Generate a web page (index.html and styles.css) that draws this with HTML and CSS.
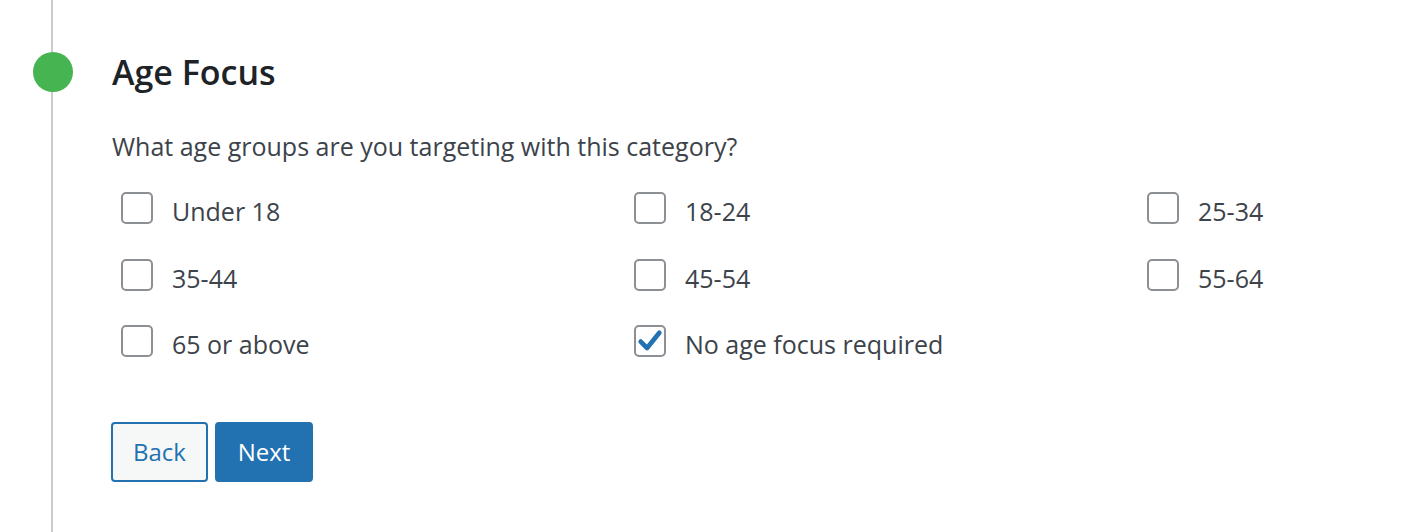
FILE: index.html
```html
<!DOCTYPE html>
<html>
<head>
<meta charset="utf-8">
<link rel="stylesheet" href="styles.css">
</head>
<body>
<div class="timeline">
  <div class="step">
    <span class="dot"></span>
    <h2 class="title">Age Focus</h2>
    <p class="question">What age groups are you targeting with this category?</p>
    <div class="options">
      <label class="opt"><span class="box"></span><span class="lbl">Under 18</span></label>
      <label class="opt"><span class="box"></span><span class="lbl">18-24</span></label>
      <label class="opt"><span class="box"></span><span class="lbl">25-34</span></label>
      <label class="opt"><span class="box"></span><span class="lbl">35-44</span></label>
      <label class="opt"><span class="box"></span><span class="lbl">45-54</span></label>
      <label class="opt"><span class="box"></span><span class="lbl">55-64</span></label>
      <label class="opt"><span class="box"></span><span class="lbl">65 or above</span></label>
      <label class="opt"><span class="box checked"><svg viewBox="0 0 24 24" width="28" height="28"><path d="M4 12.5 L9.5 18 L20 5" fill="none" stroke="#2271b1" stroke-width="4" stroke-linecap="round" stroke-linejoin="round"/></svg></span><span class="lbl">No age focus required</span></label>
    </div>
    <div class="actions">
      <button class="btn btn-back">Back</button>
      <button class="btn btn-next">Next</button>
    </div>
  </div>
</div>
</body>
</html>
```
FILE: styles.css
```css
html, body {
  margin: 0;
  padding: 0;
  background: #ffffff;
}
body {
  font-family: "Open Sans", "Noto Sans", sans-serif;
  color: #3c434a;
  height: 532px;
  overflow: hidden;
}
.timeline {
  position: relative;
  height: 532px;
  margin-left: 51px;
  border-left: 2px solid #cccccc;
}
.step {
  position: relative;
  padding: 49px 0 0 59px;
}
.dot {
  position: absolute;
  left: -20px;
  top: 52px;
  width: 40px;
  height: 40px;
  border-radius: 50%;
  background: #46b450;
}
.title {
  margin: 0;
  font-size: 34px;
  line-height: 46px;
  font-weight: 600;
  color: #1d2327;
}
.question {
  margin: 34px 0 0 0;
  font-size: 25px;
  line-height: 34px;
  color: #3c434a;
}
.options {
  display: grid;
  grid-template-columns: 513px 513px 1fr;
  grid-auto-rows: 66.5px;
  margin: 29px 0 0 9px;
}
.opt {
  display: flex;
  align-items: flex-start;
  gap: 19px;
}
.box {
  box-sizing: border-box;
  width: 32px;
  height: 32px;
  border: 2px solid #8c8f94;
  border-radius: 5px;
  background: #fff;
  display: flex;
  align-items: center;
  justify-content: center;
  flex-shrink: 0;
}
.lbl {
  font-size: 25px;
  line-height: 40px;
  color: #3c434a;
  margin-top: -1px;
}
.actions {
  display: flex;
  gap: 7px;
  margin: 30px 0 0 -1px;
}
.btn {
  box-sizing: border-box;
  height: 60px;
  border-radius: 4px;
  font-family: "Open Sans", "Noto Sans", sans-serif;
  font-size: 24px;
  border: 2px solid #2271b1;
  padding: 0;
  cursor: pointer;
}
.btn-back {
  width: 97px;
  background: #f6f7f7;
  color: #2271b1;
}
.btn-next {
  width: 98px;
  background: #2271b1;
  color: #ffffff;
}
```
